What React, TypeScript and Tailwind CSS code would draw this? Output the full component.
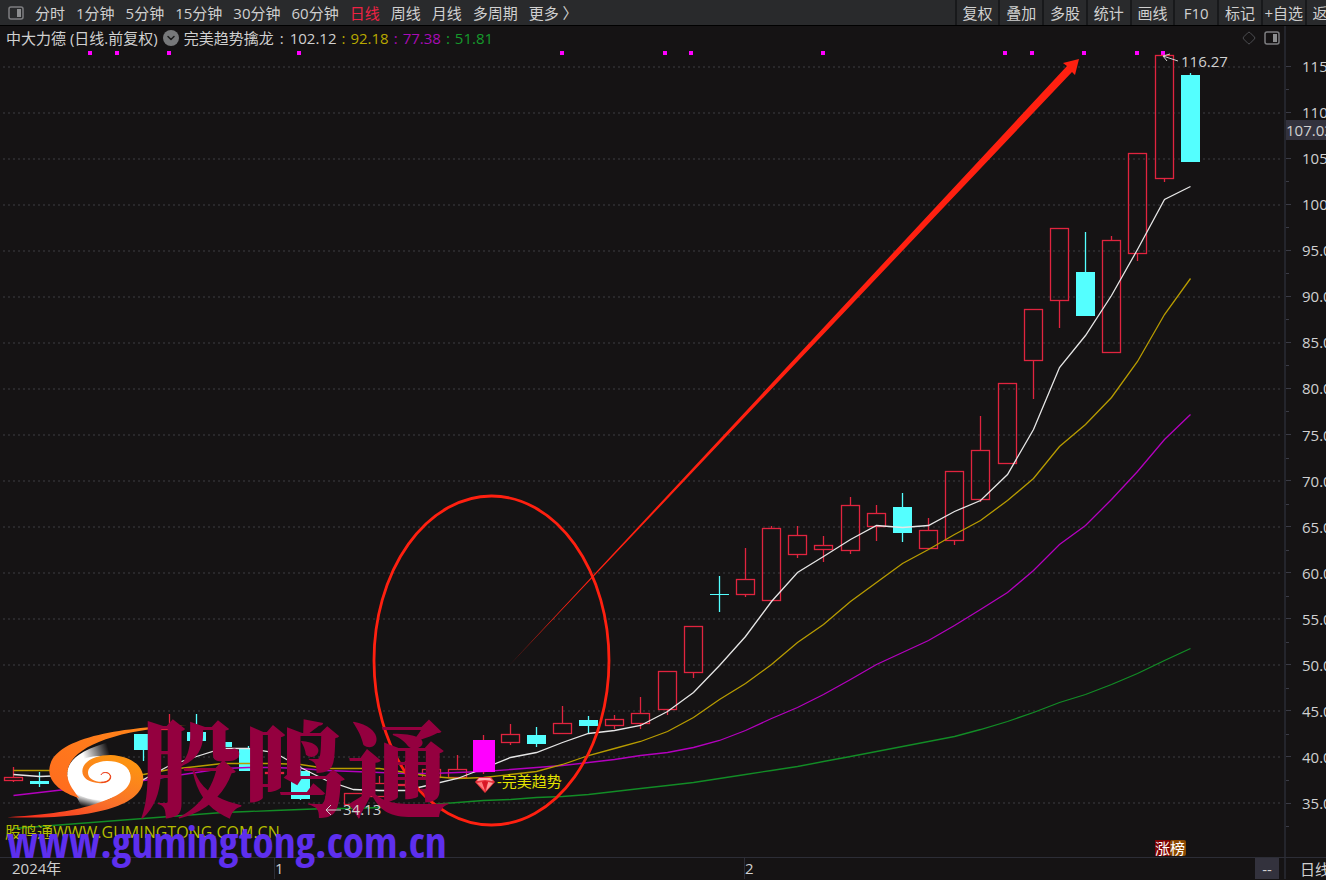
import { ChevronDown, Diamond } from 'lucide-react'

type Kind = 'up' | 'down' | 'signal'

interface Candle {
  i: number
  high: number
  top: number
  bottom: number
  low: number
  kind: Kind
}

const PERIODS = ['分时', '1分钟', '5分钟', '15分钟', '30分钟', '60分钟', '日线', '周线', '月线', '多周期']
const TOOLS = ['复权', '叠加', '多股', '统计', '画线', 'F10', '标记', '+自选', '返回']
const PRICES = [115, 110, 105, 100, 95, 90, 85, 80, 75, 70, 65, 60, 55, 50, 45, 40, 35]

const READINGS = [
  { value: '92.18', color: 'text-[#b8a800]' },
  { value: '77.38', color: 'text-[#a80cb4]' },
  { value: '51.81', color: 'text-[#159a2c]' },
]

// [index, high, body top, body bottom, low, kind]
const RAW: [number, number, number, number, number, Kind][] = [
  [0, 767, 777, 780, 781, 'up'],
  [1, 772, 781, 784, 787, 'down'],
  [5, 734, 734, 750, 761, 'down'],
  [6, 714, 729, 753, 753, 'up'],
  [7, 714, 732, 741, 741, 'down'],
  [8, 725, 742, 747, 747, 'down'],
  [9, 746, 748, 771, 771, 'down'],
  [10, 771, 772, 773, 773, 'up'],
  [11, 766, 771, 799, 800, 'down'],
  [12, 796, 804, 806, 807, 'down'],
  [13, 793, 793, 804, 804, 'up'],
  [14, 776, 783, 796, 796, 'up'],
  [15, 761, 784, 785, 787, 'up'],
  [16, 753, 769, 777, 779, 'up'],
  [17, 755, 769, 777, 778, 'up'],
  [18, 735, 740, 772, 774, 'signal'],
  [19, 724, 734, 742, 744, 'up'],
  [20, 727, 735, 744, 747, 'down'],
  [21, 706, 723, 733, 733, 'up'],
  [22, 716, 720, 726, 733, 'down'],
  [23, 715, 719, 725, 728, 'up'],
  [24, 697, 713, 723, 728, 'up'],
  [25, 671, 671, 709, 714, 'up'],
  [26, 626, 626, 672, 677, 'up'],
  [27, 576, 594, 595, 612, 'down'],
  [28, 548, 579, 594, 596, 'up'],
  [29, 526, 528, 600, 600, 'up'],
  [30, 526, 535, 554, 557, 'up'],
  [31, 536, 545, 549, 561, 'up'],
  [32, 497, 505, 550, 553, 'up'],
  [33, 505, 513, 526, 540, 'up'],
  [34, 493, 507, 533, 542, 'down'],
  [35, 518, 530, 548, 548, 'up'],
  [36, 471, 471, 540, 544, 'up'],
  [37, 416, 450, 499, 501, 'up'],
  [38, 383, 383, 463, 463, 'up'],
  [39, 309, 309, 360, 398, 'up'],
  [40, 228, 228, 300, 327, 'up'],
  [41, 232, 272, 316, 316, 'down'],
  [42, 236, 240, 352, 352, 'up'],
  [43, 153, 153, 253, 260, 'up'],
  [44, 55, 55, 178, 181, 'up'],
  [45, 73, 75, 162, 162, 'down'],
]

const CANDLES: Candle[] = RAW.map(([i, high, top, bottom, low, kind]) => ({ i, high, top, bottom, low, kind }))

const SIGNAL_DOTS = [90, 117, 169, 299, 562, 665, 691, 823, 1005, 1032, 1084, 1137, 1163]

// one value per candle
const MA_WHITE = [
  774, 776, 775, 776, 778, 779, 765, 756, 748, 748, 752, 767, 780, 789, 790, 790, 784, 778, 768, 757, 752, 742, 733,
  730, 725, 711, 692, 665, 636, 601, 572, 556, 539, 525, 527, 525, 511, 500, 474, 429, 367, 335, 295, 249, 199, 186,
]
const MA_YELLOW = [
  770, 770, 770, 770, 773, 774, 769, 766, 763, 763, 763, 764, 768, 768, 768, 772, 776, 778, 777, 774, 771, 764, 755,
  748, 741, 731, 717, 699, 683, 664, 642, 624, 601, 582, 563, 549, 534, 520, 500, 478, 446, 424, 397, 361, 314, 278,
]
const MA_MAGENTA = [
  795, 792, 789, 786, 783, 780, 776, 772, 768, 767, 767, 768, 770, 771, 772, 773, 773, 772, 771, 769, 767, 765, 762,
  759, 755, 752, 747, 740, 730, 718, 707, 694, 679, 664, 652, 640, 625, 609, 592, 570, 544, 525, 499, 471, 439, 414,
]
const MA_GREEN = [
  828, 826, 824, 822, 820, 818, 816, 814, 812, 811, 810, 809, 808, 808, 807, 806, 804, 802, 800, 799, 797, 796, 794,
  791, 788, 785, 782, 778, 774, 770, 766, 761, 756, 751, 746, 741, 736, 729, 721, 712, 702, 694, 684, 673, 660, 648,
]

const xAt = (i: number) => Math.floor(13 + i * 26.16) + 0.5

const toPoints = (values: number[]) => values.map((y, i) => `${xAt(i)},${y + 0.5}`).join(' ')

function PanelIcon() {
  return (
    <svg width="16" height="14" viewBox="0 0 16 14" fill="none" aria-hidden="true">
      <rect x="1" y="1" width="14" height="12" rx="2" stroke="#7d7e80" strokeWidth="1.5" />
      <rect x="9" y="3" width="4" height="8" fill="#8c8d8f" />
    </svg>
  )
}

function CandleMark({ candle }: { candle: Candle }) {
  const { high, top, bottom, low, kind } = candle
  const x = xAt(candle.i)

  if (kind === 'up') {
    return (
      <g stroke="#e0243f" strokeWidth="1.3" fill="none">
        <path d={`M${x},${high}V${top} M${x},${bottom}V${low + 1}`} />
        <rect x={x - 9} y={top + 0.5} width={18} height={bottom - top} />
      </g>
    )
  }

  const color = kind === 'signal' ? '#ff00ff' : '#54ffff'
  const half = kind === 'signal' ? 10.5 : 9.5
  return (
    <g>
      <path d={`M${x},${high}V${low}`} stroke={kind === 'signal' ? '#e0243f' : color} strokeWidth="1.3" />
      <rect x={x - half} y={top} width={half * 2} height={bottom - top} fill={color} />
    </g>
  )
}

function Gem() {
  return (
    <g>
      <path d="M479,777H491L495,782L485,793L475,782Z" fill="#e8323c" />
      <path d="M479,778H490L493,781L485,780L477,781Z" fill="#ffb4b4" />
      <path d="M477,783L482,782L485,791Z" fill="#ff7d7d" />
      <path d="M488,782L493,783L486,791Z" fill="#ff9a98" />
      <path d="M482,782L485,781L488,782L485,790Z" fill="#d81826" />
    </g>
  )
}

function Swirl() {
  return (
    <g transform="translate(0 700) scale(0.3333)">
      <defs>
        <linearGradient id="swirlTop" x1="0" y1="1" x2="1" y2="0">
          <stop offset="0" stopColor="#ff6a1f" />
          <stop offset="1" stopColor="#ff8a18" />
        </linearGradient>
        <linearGradient id="swirlRing" x1="0" y1="1" x2="0.7" y2="0">
          <stop offset="0" stopColor="#f8261c" />
          <stop offset="0.5" stopColor="#f9702a" />
          <stop offset="1" stopColor="#fd9312" />
        </linearGradient>
        <linearGradient id="fadeTop" gradientUnits="userSpaceOnUse" x1="250" y1="170" x2="325" y2="145">
          <stop offset="0" stopColor="#ffffff" />
          <stop offset="1" stopColor="#151314" />
        </linearGradient>
        <linearGradient id="fadeBottom" gradientUnits="userSpaceOnUse" x1="270" y1="292" x2="262" y2="322">
          <stop offset="0" stopColor="#ffffff" />
          <stop offset="1" stopColor="#151314" />
        </linearGradient>
      </defs>
      <path d="M202,217C204,180 245,145 335,125C322,145 322,160 340,175L300,240L215,270Z" fill="url(#fadeTop)" />
      <path d="M202,217C200,245 230,285 245,322C290,318 330,300 360,275L300,230Z" fill="url(#fadeBottom)" />
      <ellipse cx="298" cy="234" rx="96" ry="66" fill="#ffffff" />
      <path d="M562,76C400,80 148,105 148,212C148,250 190,280 238,294C212,262 200,240 202,217C208,150 320,92 562,76Z" fill="url(#swirlTop)" />
      <path d="M247,214C247,182 290,165 332,165C390,168 430,195 430,236C430,312 300,360 22,352C170,342 245,328 300,307C360,287 392,265 392,232C392,200 360,182 320,183C285,185 264,200 264,218C264,238 290,248 312,245C330,241 334,228 325,221C316,215 306,218 303,225C306,214 326,212 332,226C337,244 318,250 300,250C268,248 247,236 247,214Z" fill="url(#swirlRing)" />
      <path d="M303,225C306,215 328,214 332,229C333,241 320,247 304,247" fill="none" stroke="#e8301c" strokeWidth="3" />
    </g>
  )
}

function Chart() {
  return (
    <svg
      viewBox="0 50 1284 807"
      className="relative z-10 block w-full overflow-visible"
      role="img"
      aria-label="中大力德 日线"
    >
      <defs>
        <linearGradient id="arrowFade" gradientUnits="userSpaceOnUse" x1="505" y1="670" x2="550" y2="622">
          <stop offset="0" stopColor="#ff2010" stopOpacity="0.7" />
          <stop offset="1" stopColor="#ff2010" />
        </linearGradient>
      </defs>

      {/* grid */}
      {PRICES.map((price, n) => (
        <path key={price} d={`M3,${67 + n * 46}H1281`} stroke="#29282b" strokeWidth="2" strokeDasharray="2 3" />
      ))}

      {SIGNAL_DOTS.map(x => (
        <rect key={x} x={x - 2} y={51} width={4} height={4} fill="#ff00ff" />
      ))}

      {CANDLES.map(c => (
        <CandleMark key={c.i} candle={c} />
      ))}

      {/* moving averages */}
      <g fill="none" strokeWidth="1.3">
        <polyline points={toPoints(MA_GREEN)} stroke="#128c26" />
        <polyline points={toPoints(MA_MAGENTA)} stroke="#b400be" />
        <polyline points={toPoints(MA_YELLOW)} stroke="#b89c00" />
        <polyline points={toPoints(MA_WHITE)} stroke="#e6e6e6" />
      </g>
      <rect x="473" y="740" width="22" height="32" fill="#ff00ff" />

      {/* high mark */}
      <path d="M1178,61L1163,56M1170,54L1163,56L1167,61" stroke="#d0d0d0" fill="none" />
      <text x="1181" y="67" fontSize="15" fill="#d0d0d0">116.27</text>

      <Gem />
      <text x="497" y="787" fontSize="15" fill="#e4e400">-完美趋势</text>
      <text x="5" y="838" fontSize="16" fill="#b4bc00">股鸣通WWW.GUMINGTONG.COM.CN</text>

      <rect x="1155" y="840" width="15" height="16" fill="#7d0202" />
      <rect x="1170" y="840" width="16" height="16" rx="2" fill="#8a4800" />
      <text x="1155" y="854" fontSize="15" fill="#ffffff">涨榜</text>

      {/* annotation */}
      <ellipse cx="491.5" cy="660.5" rx="117.5" ry="164.5" fill="none" stroke="#ff2010" strokeWidth="2.8" />
      <path d="M505,670L1067,66L1063,63L1079,59L1075,75L1072,72Z" fill="url(#arrowFade)" />

      {/* watermark */}
      <Swirl />
      <text
        x="139"
        y="809"
        fontSize="104"
        fill="#94003f"
        className="font-black [font-family:'Noto_Serif_CJK_SC','Noto_Sans_CJK_SC',serif]"
      >
        股鸣通
      </text>
      <text
        x="7"
        y="858"
        fontSize="43"
        fill="#5e2fee"
        className="font-bold [font-family:'Open_Sans_Condensed','Liberation_Sans_Narrow',sans-serif]"
      >
        www.gumingtong.com.cn
      </text>

      {/* low mark */}
      <path d="M341,810H326M331,805L326,810L331,815" stroke="#d0d0d0" fill="none" />
      <text x="343" y="815" fontSize="15" fill="#d0d0d0">34.13</text>
    </svg>
  )
}

function Toolbar() {
  return (
    <header className="flex h-[26px] items-stretch justify-between border-b border-black bg-[#292a2c]">
      <nav className="flex items-center gap-[11px] pl-2">
        <button aria-label="侧栏" className="flex">
          <PanelIcon />
        </button>
        {PERIODS.map(p => (
          <button key={p} className={p === '日线' ? 'text-[#ee2244]' : ''}>
            {p}
          </button>
        ))}
        <button>更多 〉</button>
      </nav>
      <div className="w-[28%] overflow-hidden">
        <div className="grid h-full w-[106%] grid-cols-9">
          {TOOLS.map(t => (
            <button key={t} className="border-l-2 border-[#18191b] whitespace-nowrap">
              {t}
            </button>
          ))}
        </div>
      </div>
    </header>
  )
}

function PriceAxis() {
  return (
    <aside className="relative w-[42px] shrink-0 overflow-hidden border-l-2 border-[#24252c]">
      <ul className="flex h-full flex-col justify-between pt-[30px] pb-[44px]">
        {PRICES.map(p => (
          <li key={p} className="relative flex h-5 items-center gap-[11px]">
            <span className="h-px w-[5px] shrink-0 bg-[#3a3b45]" />
            <span>{p.toFixed(2)}</span>
            <span className="absolute top-[33px] h-px w-[3px] bg-[#3a3b45]" />
          </li>
        ))}
      </ul>
      <div className="absolute top-[94px] left-0 h-5 bg-[#33323d] leading-5">107.03</div>
    </aside>
  )
}

export default function App() {
  return (
    <div className="min-h-screen overflow-hidden bg-[#151314] text-[15px] leading-5 text-[#d0d0d0] [font-family:'Open_Sans','Noto_Sans_CJK_SC',sans-serif]">
      <Toolbar />

      <main className="flex">
        <section className="min-w-0 flex-1">
          <div className="flex h-6 items-center justify-between pr-1 pl-[6px]">
            <div className="flex items-center">
              <h1>中大力德 (日线.前复权)</h1>
              <button aria-label="选择指标" className="mx-[5px] flex size-4 items-center justify-center rounded-full bg-[#77787a] text-[#1b1b1c]">
                <ChevronDown size={12} strokeWidth={3} />
              </button>
              <span>完美趋势擒龙</span>
              <span className="px-[6px]">:</span>
              <span>102.12</span>
              {READINGS.map(r => (
                <span key={r.value} className={r.color}>
                  <span className="px-[5px]">:</span>
                  {r.value}
                </span>
              ))}
            </div>
            <div className="flex items-center gap-2">
              <Diamond size={14} strokeWidth={1.5} className="text-[#55565a]" />
              <button aria-label="右侧栏" className="flex">
                <PanelIcon />
              </button>
            </div>
          </div>
          <Chart />
        </section>
        <PriceAxis />
      </main>

      <footer className="flex h-[22px] border-t border-[#2c2d36]">
        <div className="grid flex-1 grid-cols-[274fr_470fr_511fr_24fr_5fr]">
          <span className="pl-3">2024年</span>
          <span className="border-l border-[#2c2d36]">1</span>
          <span className="border-l border-[#2c2d36]">2</span>
          <button className="bg-[#33323d] text-center">--</button>
        </div>
        <button className="w-[42px] overflow-hidden border-l-2 border-[#24252c] pl-[14px] text-left whitespace-nowrap">日线</button>
      </footer>
    </div>
  )
}
